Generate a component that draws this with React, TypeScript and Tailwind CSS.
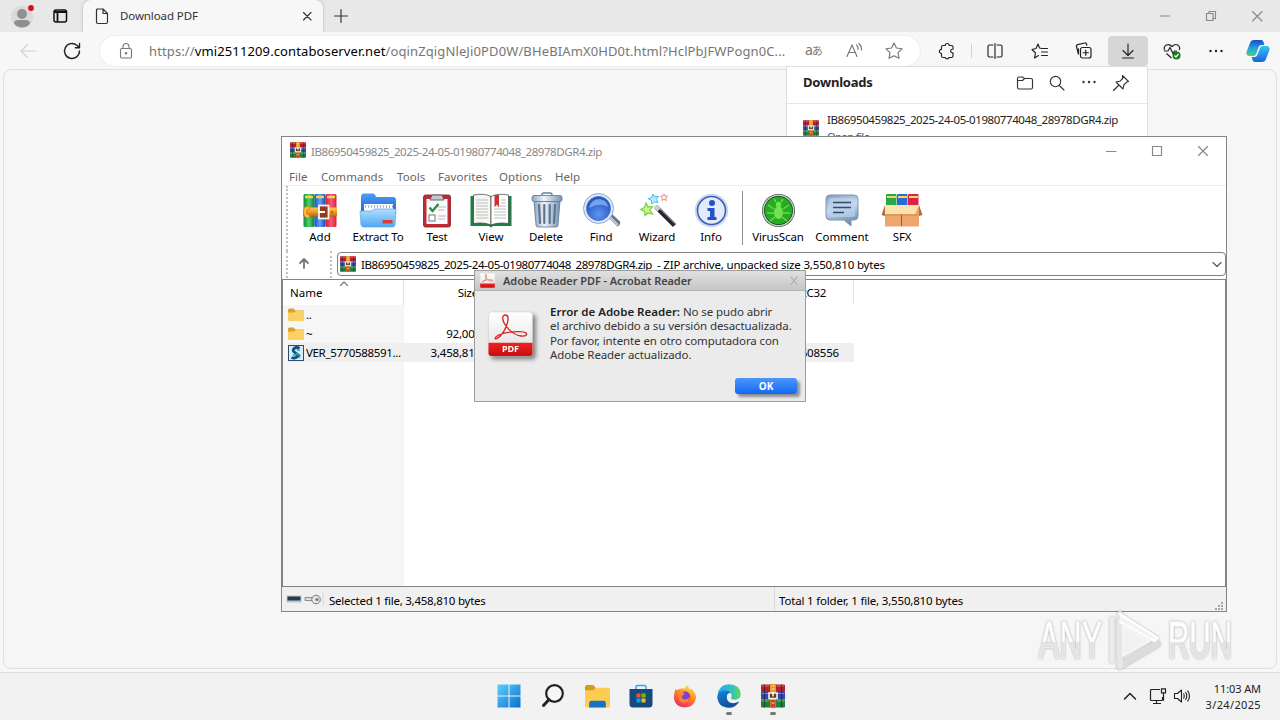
import type { ReactNode } from 'react';
import clsx from 'clsx';

function RarIcon({ className }: { className?: string }) {
  return (
    <svg viewBox="0 0 24 24" className={className}>
      <rect x="0" y="0.5" width="24" height="7.5" rx="1" fill="#b3222c" />
      <rect x="0" y="8" width="24" height="7.5" fill="#3a45a8" />
      <rect x="0" y="15.5" width="24" height="8" rx="1" fill="#22803c" />
      <path d="M1 2h7M16 2h7" stroke="#e8616a" strokeWidth="1.2" />
      <path d="M1 9.5h7M16 9.5h7" stroke="#7e8be6" strokeWidth="1.2" />
      <path d="M1 17h7M16 17h7" stroke="#5fc46f" strokeWidth="1.2" />
      <path d="M3.5 .5v23M20.5 .5v23" stroke="#20222c" strokeWidth="1.2" opacity="0.6" />
      <rect x="9" y="0" width="6" height="24" fill="#e49a2c" />
      <rect x="9.5" y="16" width="5" height="7.5" fill="#c9442a" />
      <path d="M8 9h8v5.500H8z" fill="#5b3a28" stroke="#fbf3e2" strokeWidth="1.600" />
      <path d="M12 8v4.500" stroke="#fff" strokeWidth="1.500" />
      <path d="M10.500 2h3M10.500 5h3M10.500 19h3" stroke="#ffe08a" strokeWidth="1.100" />
    </svg>
  );
}

function AddIcon() {
  return (
    <svg viewBox="0 0 42 36" className="h-9 w-[42px]">
      <defs>
        <linearGradient id="bkG"><stop offset="0" stopColor="#0c8a3c" /><stop offset="0.5" stopColor="#4fd268" /><stop offset="1" stopColor="#0c7b35" /></linearGradient>
        <linearGradient id="bkB"><stop offset="0" stopColor="#1653c0" /><stop offset="0.5" stopColor="#5fa2ff" /><stop offset="1" stopColor="#1348ab" /></linearGradient>
        <linearGradient id="bkR"><stop offset="0" stopColor="#c9183a" /><stop offset="0.5" stopColor="#ff5a72" /><stop offset="1" stopColor="#d02340" /></linearGradient>
        <linearGradient id="belt" x2="0" y2="1"><stop offset="0" stopColor="#ffc955" /><stop offset="0.5" stopColor="#f39a1f" /><stop offset="1" stopColor="#b76410" /></linearGradient>
      </defs>
      <rect x="4.500" y="2" width="11" height="33" rx="1.500" fill="url(#bkG)" />
      <rect x="15.500" y="2" width="11" height="33" rx="1.500" fill="url(#bkB)" />
      <rect x="26.500" y="2" width="11" height="33" rx="1.500" fill="url(#bkR)" />
      <path d="M6 5h8M17 5h8M28 5h8" stroke="#f4d552" strokeWidth="2.400" />
      <rect x="4" y="15.500" width="34" height="9" rx="1" fill="url(#belt)" />
      <path d="M10.500 14.500q-6-1-6 5.500t6 6v-3q-3 0-3-3t3-3z" fill="#ffbd45" stroke="#c8771a" strokeWidth="0.800" />
      <rect x="20" y="13.500" width="9.500" height="13" fill="#8d3d20" stroke="#fff5e4" strokeWidth="1.800" />
      <path d="M19 20h7" stroke="#fff" strokeWidth="2" />
      <circle cx="33" cy="20" r="0.900" fill="#8d4a10" />
    </svg>
  );
}

function ExtractIcon() {
  return (
    <svg viewBox="0 0 42 36" className="h-9 w-[42px]">
      <defs>
        <linearGradient id="fdA" x2="0" y2="1"><stop offset="0" stopColor="#4f9cf4" /><stop offset="1" stopColor="#1d5fd2" /></linearGradient>
        <linearGradient id="fdB" x2="0" y2="1"><stop offset="0" stopColor="#b2dffd" /><stop offset="1" stopColor="#4fa8f2" /></linearGradient>
      </defs>
      <path d="M4 5q0-3.500 3-3.500h9q2 0 3 3.500h17q3 0 3 3v14H4z" fill="url(#fdA)" />
      <rect x="7" y="12" width="29" height="11" fill="#f8fbff" />
      <path d="M8 14.500h28" stroke="#8b98ab" strokeWidth="2" strokeDasharray="1 2" />
      <path d="M3 19h12l2-2h22l-1 16q-.3 2-2.500 2H6.500q-2 0-2.500-2z" fill="url(#fdB)" stroke="#5aa5ec" strokeWidth="0.700" />
      <rect x="25.500" y="28" width="10" height="3.500" rx="0.500" fill="#dc3c33" />
    </svg>
  );
}

function TestIcon() {
  return (
    <svg viewBox="0 0 42 36" className="h-9 w-[42px]">
      <rect x="7.500" y="3" width="27" height="32" rx="2" fill="#c02a34" stroke="#8b1720" strokeWidth="0.800" />
      <path d="M10.500 7h21v25h-21z" fill="#fbfbfb" />
      <path d="M14 8l2-5h10l2 5z" fill="#c4c9d0" stroke="#555b66" strokeWidth="0.900" />
      <path d="M13.500 15.500l3 3.500 6-7" fill="none" stroke="#2a8f3c" strokeWidth="2.400" />
      <path d="M22 15h8M22 18h6M22 24h8M22 27h7" stroke="#b5b9c0" strokeWidth="1" />
      <rect x="13" y="23" width="6" height="6" fill="#fff" stroke="#70757f" />
    </svg>
  );
}

function ViewIcon() {
  return (
    <svg viewBox="0 0 42 36" className="h-9 w-[42px]">
      <path d="M0.500 4h41v30H23l-2 1.500L19 34H.5z" fill="#1f7d43" />
      <path d="M3.500 3q11-2 17.500 1.500V33Q14 30 3.500 31.500z" fill="#f6f6f2" stroke="#3b4038" strokeWidth="0.700" />
      <path d="M38.500 3Q27.500 1 21 4.500V33q7-3 17.500-1.500z" fill="#fff" stroke="#3b4038" strokeWidth="0.700" />
      <path d="M6 8h12M6 11h12M6 14h12M6 17h12M6 20h12M6 23h12M6 26h12M24 14h12M24 17h12M24 20h12M24 23h12M24 26h12M31 8h5M31 11h5" stroke="#bcc0bd" strokeWidth="1" />
      <path d="M24.500 3h4.500v12l-2.200-2.500-2.300 2.500z" fill="#cf2e33" />
    </svg>
  );
}

function DeleteIcon() {
  return (
    <svg viewBox="0 0 42 36" className="h-9 w-[42px]">
      <defs>
        <linearGradient id="bin"><stop offset="0" stopColor="#8ca5c2" /><stop offset="0.400" stopColor="#eef4fa" /><stop offset="1" stopColor="#7892b0" /></linearGradient>
      </defs>
      <path d="M17 3q0-2 2-2h6q2 0 2 2" fill="none" stroke="#64809f" strokeWidth="1.500" />
      <path d="M9 9h26l-2 24q0 2-2 2H13q-2 0-2-2z" fill="url(#bin)" stroke="#5a7593" strokeWidth="0.800" />
      <path d="M14 13l1 18M19.300 13v18M24.700 13v18M30 13l-1 18" stroke="#5c7591" strokeWidth="2.200" strokeLinecap="round" />
      <rect x="7" y="3.500" width="30" height="6" rx="2" fill="url(#bin)" stroke="#5a7593" strokeWidth="0.800" />
    </svg>
  );
}

function FindIcon() {
  return (
    <svg viewBox="0 0 42 36" className="h-9 w-[42px]">
      <defs>
        <radialGradient id="lens" cx="0.5" cy="0.75" r="0.75"><stop offset="0" stopColor="#5d95f2" /><stop offset="1" stopColor="#1d4cba" /></radialGradient>
      </defs>
      <path d="M28 25l4-3 8 7.500q1 3-2.500 5z" fill="#6d737d" />
      <path d="M30 25l8 8" stroke="#c4cad2" strokeWidth="2" />
      <circle cx="18.500" cy="16.500" r="15" fill="#dce9fa" stroke="#8ea8ce" strokeWidth="1" />
      <circle cx="18.500" cy="16.500" r="12" fill="url(#lens)" stroke="#4c75bd" />
      <path d="M9 16q2-9 11-9 7 1 8 8-8-5-19 1z" fill="#92bdfa" opacity="0.700" />
    </svg>
  );
}

function WizardIcon() {
  return (
    <svg viewBox="0 0 42 36" className="h-9 w-[42px]">
      <path d="M20 15l18.500 18.500" stroke="#24262a" strokeWidth="4.500" />
      <path d="M21 13.500l18 18" stroke="#878b92" strokeWidth="1.200" />
      <path d="M19 14l4 4" stroke="#c9ced5" strokeWidth="4.500" />
      <path d="M10 11l2 4 4.500-.5-2.500 3.500 2.500 4-4.500-1-3 2.500-.5-4-4-2 4-2z" fill="#c8f58e" stroke="#79d142" strokeWidth="1.200" />
      <path d="M17 2l1.800 2.800 3.700-.3-2 3L22 10.500l-3.500-.5-2.800 2-.2-3.500-3.300-1.800 3.600-1.200z" fill="#b7ecff" stroke="#45bfe8" />
      <path d="M28 2l1 2 2.500.2-1.800 1.800.5 2.500-2.200-1.200-2.200 1.200.5-2.500L24.500 4.200 27 4z" fill="#fff" stroke="#ee777b" strokeWidth="0.900" />
    </svg>
  );
}

function InfoIcon() {
  return (
    <svg viewBox="0 0 42 36" className="h-9 w-[42px]">
      <circle cx="21.500" cy="18.500" r="16.800" fill="#ced9ee" />
      <circle cx="21.500" cy="18.500" r="14" fill="#e3ebfb" stroke="#3d5fb8" strokeWidth="1.600" />
      <circle cx="22" cy="11" r="3" fill="#2352c6" />
      <path d="M17.500 16h7v9h2v3h-9v-3h2.500v-6h-2.500z" fill="#2352c6" />
    </svg>
  );
}

function VirusIcon() {
  return (
    <svg viewBox="0 0 42 36" className="h-9 w-[42px]">
      <circle cx="21.500" cy="18.500" r="16.500" fill="#223a28" />
      <circle cx="21.500" cy="18.500" r="15.200" fill="none" stroke="#bcd3bf" strokeWidth="1.500" />
      <circle cx="21.500" cy="18.500" r="13.700" fill="#23ad20" />
      <ellipse cx="21.500" cy="20.500" rx="4.500" ry="6.500" fill="#72e152" />
      <circle cx="21.500" cy="12.500" r="2.700" fill="#72e152" />
      <path d="M17 17l-6-4M17 21h-7M18 25l-5 4M26 17l6-4M26 21h7M25 25l5 4M19 10l-2-3M24 10l2-3" stroke="#6bd94b" strokeWidth="1.500" />
    </svg>
  );
}

function CommentIcon() {
  return (
    <svg viewBox="0 0 42 36" className="h-9 w-[42px]">
      <defs>
        <linearGradient id="cmt" x2="0.300" y2="1"><stop offset="0" stopColor="#7f9dc3" /><stop offset="0.500" stopColor="#c9dcf2" /><stop offset="1" stopColor="#7290b5" /></linearGradient>
      </defs>
      <path d="M9 3h24q4 0 4 4v17q0 4-4 4h-3v6l-7-6H9q-4 0-4-4V7q0-4 4-4z" fill="url(#cmt)" stroke="#7e94b0" />
      <rect x="8" y="6" width="26" height="19" rx="2.500" fill="#bcd1ea" opacity="0.700" />
      <path d="M12 10.500h18M12 15.500h18M12 20.500h11" stroke="#344a69" strokeWidth="1.700" />
    </svg>
  );
}

function SfxIcon() {
  return (
    <svg viewBox="0 0 42 36" className="h-9 w-[42px]">
      <rect x="5" y="2" width="10.500" height="14" rx="1" fill="#27a849" />
      <rect x="16" y="2" width="10.500" height="14" rx="1" fill="#2a68dc" />
      <rect x="27" y="2" width="10.500" height="14" rx="1" fill="#dc2343" />
      <path d="M6 5h9M17 5h9M28 5h9" stroke="#f1d75c" strokeWidth="2" />
      <path d="M4 13h34v21.500H4z" fill="#eda66e" />
      <path d="M4 13h34l-4 9H1.500z" fill="#fae3ac" />
      <path d="M38 13l3.500 10-3.500 1zM4 13L.500 23 4 24z" fill="#b46c3e" />
      <path d="M20.500 22v12" stroke="#9c5a33" />
      <path d="M4 23h33" stroke="#d18a56" strokeWidth="1" />
    </svg>
  );
}

interface Tool {
  label: string;
  icon: ReactNode;
  cell: string;
  text: string;
}

const tools: Tool[] = [
  { label: 'Add', icon: <AddIcon />, cell: 'w-14', text: 'tracking-normal' },
  { label: 'Extract To', icon: <ExtractIcon />, cell: 'w-[60px]', text: 'tracking-[-0.2px]' },
  { label: 'Test', icon: <TestIcon />, cell: 'w-[58px]', text: 'tracking-[-0.2px]' },
  { label: 'View', icon: <ViewIcon />, cell: 'w-[50px]', text: 'tracking-normal' },
  { label: 'Delete', icon: <DeleteIcon />, cell: 'w-[60px]', text: 'tracking-[-0.2px]' },
  { label: 'Find', icon: <FindIcon />, cell: 'w-[50px]', text: 'tracking-[-0.1px]' },
  { label: 'Wizard', icon: <WizardIcon />, cell: 'w-[62px]', text: 'tracking-[-0.1px]' },
  { label: 'Info', icon: <InfoIcon />, cell: 'w-[46px]', text: 'tracking-[-0.1px]' },
];

const extraTools: Tool[] = [
  { label: 'VirusScan', icon: <VirusIcon />, cell: 'w-[54px]', text: 'tracking-[-0.1px]' },
  { label: 'Comment', icon: <CommentIcon />, cell: 'w-[74px]', text: 'tracking-normal' },
  { label: 'SFX', icon: <SfxIcon />, cell: 'w-[46px]', text: 'tracking-[-0.2px]' },
];

function ToolButton({ tool }: { tool: Tool }) {
  return (
    <div className={clsx('flex flex-col items-center pt-1.5', tool.cell)}>
      {tool.icon}
      <span className={clsx('mt-px text-[11.5px] leading-4 whitespace-nowrap text-black', tool.text)}>{tool.label}</span>
    </div>
  );
}

function Dots() {
  return (
    <svg viewBox="0 0 20 20" className="size-5" fill="currentColor">
      <circle cx="4.500" cy="10" r="1.200" /><circle cx="10" cy="10" r="1.200" /><circle cx="15.500" cy="10" r="1.200" />
    </svg>
  );
}

function Line({ d, className }: { d: string; className?: string }) {
  return (
    <svg viewBox="0 0 20 20" className={clsx('size-5 shrink-0', className)} fill="none" stroke="currentColor" strokeWidth="1.150" strokeLinecap="round" strokeLinejoin="round">
      <path d={d} />
    </svg>
  );
}

function FolderIcon() {
  return (
    <svg viewBox="0 0 16 14" className="h-3.5 w-4">
      <path d="M0 2q0-1.500 1.500-1.500h4L7.500 2.500H15q1 0 1 1V6H0z" fill="#dda02b" />
      <path d="M0 4.500h6L8 3h7q1 0 1 1v8q0 1-1 1H1q-1 0-1-1z" fill="#fbd065" />
    </svg>
  );
}

function AcrobatMark({ className }: { className?: string }) {
  return (
    <svg viewBox="0 0 46 46" className={className}>
      <defs>
        <linearGradient id="pdfTop" x2="0" y2="1"><stop offset="0" stopColor="#ffffff" /><stop offset="1" stopColor="#dedede" /></linearGradient>
        <linearGradient id="pdfRed" x2="0" y2="1"><stop offset="0" stopColor="#f0231d" /><stop offset="1" stopColor="#c80d10" /></linearGradient>
      </defs>
      <rect x="0.500" y="0.500" width="45" height="45" rx="3" fill="url(#pdfTop)" stroke="#cfcfcf" strokeWidth="0.600" />
      <path d="M0.500 32h45v11q0 2.500-2.500 2.500H3Q.5 45.500.5 43z" fill="url(#pdfRed)" />
      <path d="M10 27c5-3 10.500-13 10.500-20 0-4.500-5.500-4.500-5.500-.5 0 7 10 17.500 18.500 18.500 5 .5 7-1 5.500-2.700C36 19 17 21 10 24.500c-4 2.500-3 5 0 2.500z" fill="none" stroke="#d9262a" strokeWidth="1.400" strokeLinejoin="round" />
    </svg>
  );
}

function BrowserTabs() {
  return (
    <div className="flex h-8 items-stretch bg-[#e8e8e8]">
      <div className="flex w-[83px] items-center">
        <svg viewBox="0 0 26 28" className="ml-[10px] h-7 w-[26px]">
          <circle cx="12" cy="15" r="11" fill="#dcdad8" />
          <circle cx="12" cy="12" r="5" fill="#918f8d" />
          <path d="M4 21.500q0-3.500 4-3.500h8q4 0 4 3.500-3 4-8 4t-8-4z" fill="#918f8d" />
          <circle cx="21" cy="6" r="2.900" fill="#e00b1c" />
        </svg>
        <svg viewBox="0 0 16 16" className="ml-4 size-4" fill="none" stroke="#111" strokeWidth="1.500">
          <rect x="2" y="2" width="12.500" height="12" rx="2" />
          <path d="M2 4h12.500M5.500 5v9" strokeWidth="1.800" />
        </svg>
      </div>
      <div className="flex w-60 items-center rounded-t-lg bg-[#f7f7f7] shadow-[0_0_3px_rgba(0,0,0,0.25)]">
        <svg viewBox="0 0 14 17" className="ml-[12px] h-[17px] w-3.5" fill="none" stroke="#333" strokeWidth="1.200" strokeLinejoin="round">
          <path d="M2.500 1h5.500l4.500 4.500V14q0 1.500-1.500 1.500H3Q1.500 15.500 1.500 14V2q0-1 1-1zM8 1v4.500h4.500" />
        </svg>
        <span className="ml-[11px] flex-1 text-[11.5px] tracking-[-0.1px] text-[#333]">Download PDF</span>
        <Line d="M6.500 6.500l7.500 7.500M14 6.500l-7.500 7.500" className="mr-[6px] text-[#333]" />
      </div>
      <div className="flex flex-1 items-center pl-2 text-[#333]">
        <Line d="M3.500 10h13M10 3.500v13" />
      </div>
      <div className="flex w-[138px] items-center text-[#888]">
        <div className="flex flex-1 justify-center"><Line d="M5.500 10h9" /></div>
        <div className="flex flex-1 justify-center"><Line d="M5.500 7.500h6.500v7H5.500zM8 7.500V5.500h6.500v7H12" /></div>
        <div className="flex flex-1 justify-center"><Line d="M5.500 5.500l9.500 9.500M15 5.500l-9.500 9.500" /></div>
      </div>
    </div>
  );
}

function AddressBar() {
  return (
    <div className="flex h-9 items-start bg-[#f7f7f7] pt-1">
      <div className="flex h-[30px] w-[100px] items-center">
        <Line d="M18 10H3M9.500 3.500L3 10l6.500 6.500" className="ml-[18px] text-[#d0d0d0]" />
        <Line d="M17.500 10a7.500 7.500 0 1 1-2.700-5.800L17.300 6.500M17.500 2.500v4.200h-4.200" className="ml-6 text-[#222] [stroke-width:1.400]" />
      </div>
      <div className="flex h-[30px] w-[820px] items-center rounded-full bg-white shadow-[0_0_2px_rgba(0,0,0,0.12)]">
        <svg viewBox="0 0 16 18" className="ml-[18px] h-[18px] w-4" fill="none" stroke="#777" strokeWidth="1.100">
          <rect x="2.500" y="6.500" width="11" height="9.500" rx="1.500" />
          <path d="M5 6.500V4.500q0-3 3-3t3 3v2" />
          <circle cx="8" cy="11.300" r="0.700" fill="#777" />
        </svg>
        <span className="mt-px ml-[15px] w-[641px] text-[13px] tracking-[0.12px] whitespace-nowrap text-[#767676]">
          https://<span className="text-black">vmi2511209.contaboserver.net</span>/oqinZqigNleJi0PD0W/BHeBIAmX0HD0t.html?HclPbJFWPogn0C...
        </span>
        <span className="mb-[3px] ml-[15px] w-[20px] font-['Noto_Sans','Noto_Sans_CJK_JP',sans-serif] text-[11px] tracking-[-1px] whitespace-nowrap text-[#777]"><span className="text-[14px]">a</span>あ</span>
        <span className="ml-[19px] flex w-5 text-[#777]">
          <Line d="M3 15.500L8 4l5 11.500M5 11.500h6.200M12.500 4q2 2 1.500 4.500M15 2.500q3 3 2.500 6.500" />
        </span>
        <Line d="M10 2l2.400 5 5.600.8-4 3.900 1 5.600-5-2.600-5 2.600 1-5.600-4-3.900 5.600-.8z" className="ml-5 text-[#777]" />
      </div>
      <div className="flex h-[30px] flex-1 items-center pl-[17px] text-[#222]">
        <Line d="M4.500 6q0-1.500 1.500-1.500h2.200a2 2 0 1 1 4 0h2.300q1.500 0 1.500 1.500v2.200h-.5a1.800 1.800 0 0 0 0 3.700h.5V15q0 1.500-1.500 1.500H12a2 2 0 0 1-3.800 0H6q-1.500 0-1.500-1.500v-2.500a2.100 2.100 0 1 1 0-4.200z" />
        <div className="mr-[13px] ml-3.5 h-3.5 w-px bg-[#d2d2d2]" />
        <Line d="M7.500 4H4.500q-1.500 0-1.500 1.500v8Q3 15 4.500 15h3M12.500 4h3q1.500 0 1.500 1.500v8q0 1.500-1.500 1.500h-3M7.500 4v11M12.500 4v11" className="hidden" />
        <Line d="M8 4H4.500Q3 4 3 5.500v9Q3 16 4.500 16H8M12 4h3.500Q17 4 17 5.500v9q0 1.500-1.500 1.500H12M10 2.500v15" />
        <Line d="M12 7.500L9.500 7 8 3 6 7.500 2 8.500l3.500 3.500L4.500 17l4-2.500M11.500 7.500h6M11.500 11h6M11.500 14.500h6" className="ml-[25px]" />
        <svg viewBox="0 0 20 20" className="ml-6 size-5" fill="none" stroke="currentColor" strokeWidth="1.200">
          <path d="M4.500 13.500L2.500 5.500q-.3-1.500 1.200-1.800l7-1.700q1.500-.3 1.800 1l.4 1.700M4.500 13.500V7.500" />
          <rect x="6.500" y="6.500" width="10.500" height="10.500" rx="2" />
          <path d="M11.750 8.800v6M8.800 11.750h6" />
        </svg>
        <div className="ml-3.5 flex h-[30px] w-10 items-center justify-center rounded bg-[#d6d6d6]">
          <Line d="M10 3v11M5 9.500l5 5 5-5M4.500 17h11" />
        </div>
        <svg viewBox="0 0 20 20" className="ml-3.5 size-5" fill="none" stroke="currentColor" strokeWidth="1.200">
          <path d="M2.500 9q-1-3.500 1.800-5 3-1.300 5.700 1.500 3-3 5.700-1.500 2.800 1.800 1.600 5M4.500 12.500l5 4.500M2 10h4l2-3.500 3 6 1.500-2.500h2.500" />
          <circle cx="14.500" cy="14.500" r="4" fill="#187a18" stroke="none" />
          <path d="M12.500 14.500l1.500 1.500 2.500-3" stroke="#fff" />
        </svg>
        <span className="ml-6"><Dots /></span>
        <svg viewBox="0 0 24 24" className="ml-5 size-6">
          <defs>
            <linearGradient id="cpA" x2="0" y2="1"><stop offset="0" stopColor="#1b48cf" /><stop offset="0.500" stopColor="#1fa3dd" /><stop offset="1" stopColor="#4fcf80" /></linearGradient>
            <linearGradient id="cpB" x2="0" y2="1"><stop offset="0" stopColor="#30c4f5" /><stop offset="1" stopColor="#1b63dc" /></linearGradient>
          </defs>
          <path d="M8 1h7q2 0 2.500 2l.9 3h-3q-2 0-2.700 2l-2.500 7q-.7 2-2.500 2H3.500Q0 17 .5 13L4 4q1-3 4-3z" fill="url(#cpA)" />
          <path d="M16 23H9q-2 0-2.500-2L5.600 18h3q2 0 2.700-2L14 9q.7-2 2.500-2h4q3.500 0 3 4L20 20q-1 3-4 3z" fill="url(#cpB)" />
        </svg>
      </div>
    </div>
  );
}

function DownloadsPanel() {
  return (
    <div className="absolute top-[66px] left-[786px] h-[90px] w-[362px] border border-[#dedede] bg-white">
      <div className="flex h-[37px] items-center border-b border-[#e6e6e6] pb-1 text-[#333]">
        <span className="ml-4 flex-1 text-[13px] font-bold tracking-[-0.2px] text-[#222]">Downloads</span>
        <Line d="M2.500 5.500q0-1.500 1.500-1.500h3.500l2 1.500H16q1.500 0 1.500 1.500v7.500q0 1.500-1.500 1.500H4q-1.500 0-1.500-1.500zM2.500 7.500h5l2-2" className="mr-3" />
        <Line d="M13.700 8.500a5.200 5.200 0 1 1-10.400 0 5.200 5.200 0 0 1 10.400 0zM12.300 12.500l4.700 4.500" className="mr-3" />
        <span className="mr-3 pb-0.5"><Dots /></span>
        <Line d="M11.500 2.500l6 6-2 .8-2.700 2.700-.8 4-7-7 4-.8 2.700-2.700zM7.500 12.500l-5 5" className="mr-4" />
      </div>
      <div className="flex pt-[8px]">
        <RarIcon className="mt-2 ml-4 size-4" />
        <div className="ml-2 flex flex-col">
          <span className="text-[11.5px] leading-4 tracking-[-0.42px] whitespace-nowrap text-[#222]">IB86950459825_2025-24-05-01980774048_28978DGR4.zip</span>
          <span className="mt-px text-[11px] leading-4 tracking-[-0.5px] text-[#0a5fb8]">Open file</span>
        </div>
      </div>
    </div>
  );
}

const menu = [
  { label: 'File', cell: 'w-8' },
  { label: 'Commands', cell: 'w-[76px]' },
  { label: 'Tools', cell: 'w-[41px]' },
  { label: 'Favorites', cell: 'w-[61px]' },
  { label: 'Options', cell: 'w-14' },
  { label: 'Help', cell: 'w-8' },
];

const rows = [
  { name: '..', size: '', script: false },
  { name: '~', size: '92,000', script: false },
  { name: 'VER_5770588591...', size: '3,458,810', script: true },
];

function ArchiveWindow() {
  return (
    <div className="absolute top-[136px] left-[281px] flex h-[476px] w-[946px] flex-col border border-[#858585] bg-white">
      <div className="flex h-[29px] items-center text-[#888]">
        <RarIcon className="mb-[3px] ml-2 size-4" />
        <span className="ml-[5px] flex-1 text-[11.5px] tracking-[-0.42px]">IB86950459825_2025-24-05-01980774048_28978DGR4.zip</span>
        <div className="mb-px flex w-[138px]">
          <div className="flex flex-1 justify-center"><Line d="M5.500 10.500h9.500" /></div>
          <div className="flex flex-1 justify-center"><Line d="M5.500 5.500h9v9h-9z" /></div>
          <div className="flex flex-1 justify-center"><Line d="M5.500 5.500l9 9M14.500 5.500l-9 9" /></div>
        </div>
      </div>
      <div className="flex h-5 items-center border-b border-[#ebebeb] pt-0.5 pl-[7px] text-[11.5px] tracking-[0.05px] text-[#666]">
        {menu.map((m) => (
          <span key={m.label} className={clsx('whitespace-nowrap', m.cell)}>{m.label}</span>
        ))}
      </div>

      <div className="flex h-[65px] pl-1">
        <div className="mr-[4px] w-px border-l-2 border-dotted border-[#c0c0c0]" />
        {tools.map((t) => <ToolButton key={t.label} tool={t} />)}
        <div className="mt-[5px] mr-2 ml-2 h-[54px] w-px bg-[#909090]" />
        {extraTools.map((t) => <ToolButton key={t.label} tool={t} />)}
      </div>

      <div className="flex h-[27px] pl-1">
        <div className="w-px border-l-2 border-dotted border-[#c0c0c0]" />
        <div className="flex w-[42px] items-center pl-1.5">
          <Line d="M10 14V5.500M6 9l4-4 4 4" className="mb-0.5 text-[#777] [stroke-width:1.800]" />
        </div>
        <div className="w-[7px] border-l-2 border-dotted border-[#c0c0c0]" />
        <div className="mt-px flex h-6 w-[889px] items-center rounded-sm border border-[#808080] text-[11.5px] whitespace-nowrap text-black">
          <RarIcon className="ml-0.5 size-4" />
          <span className="mt-px ml-[5px] tracking-[-0.42px]">IB86950459825_2025-24-05-01980774048_28978DGR4.zip</span>
          <span className="mt-px ml-[5px] flex-1 tracking-[-0.17px]">- ZIP archive, unpacked size 3,550,810 bytes</span>
          <Line d="M6 8.500l4 4 4-4" className="-mr-0.5 text-[#555]" />
        </div>
      </div>

      <div className="mt-px flex h-[308px] flex-col border border-[#828282] bg-white">
        <div className="flex h-[25px] items-center text-[11.5px] text-black">
          <div className="relative h-full w-[121px] border-r border-[#e3e3e3] pt-1 pl-[7px]">
            Name
            <Line d="M6.500 11.500L10 8l3.500 3.500" className="absolute -top-[6px] left-[51px] text-[#777]" />
          </div>
          <div className="h-full w-[80px] pt-1 pr-1.5 text-right tracking-[-0.2px]">Size</div>
          <div className="h-full w-[370px] border-r border-[#e3e3e3] pt-1 pl-[309px] tracking-[-0.4px]">CRC32</div>
        </div>
        <div className="flex h-[281px] flex-col bg-[linear-gradient(to_right,#f6f6f6_121px,white_121px)]">
          {rows.map((r) => (
            <div key={r.name} className={clsx('flex h-[19px] w-[571px] items-center text-[11.5px] text-black', r.script && 'bg-[linear-gradient(to_right,transparent_5px,#efefef_5px)]')}>
              <div className="flex w-[121px] items-center gap-[2px] pl-[5px] whitespace-nowrap">
                {r.script ? (
                  <svg viewBox="0 0 16 16" className="size-4">
                    <rect x="0.500" y="0.500" width="15" height="15" fill="#d9eef7" stroke="#2a4e72" />
                    <path d="M11.500 3.500Q9 1.500 6 3.500 4 6 7 7.500t2.500 4Q7 14 3.500 12.500" fill="none" stroke="#174e80" strokeWidth="2.800" />
                    <path d="M12 5.500L9 4.500M5 10h4M8 8l4 2-1 3" fill="none" stroke="#24a1b4" strokeWidth="1.400" />
                  </svg>
                ) : <FolderIcon />}
                <span className="tracking-[-0.35px]">{r.name}</span>
              </div>
              <div className="w-20 pr-[3px] text-right tracking-[-0.2px]">{r.size}</div>
              {r.script && <div className="w-[355px] text-right tracking-[-0.2px]">6E608556</div>}
            </div>
          ))}
        </div>
      </div>

      <div className="flex flex-1 items-center bg-[#f0f0f0] text-[11.5px] tracking-[-0.25px] text-black">
        <svg viewBox="0 0 40 14" className="ml-1 h-3.5 w-10">
          <rect x="0.500" y="3.500" width="15" height="7" fill="#b4c6d5" />
          <rect x="1.500" y="4.500" width="13" height="4" fill="#263b4b" />
          <path d="M19 5.500h9v3h-9z" fill="#ddd" stroke="#777" strokeWidth="0.800" />
          <circle cx="30" cy="7.500" r="4.300" fill="#e5e5e5" stroke="#777" />
          <circle cx="31" cy="7.500" r="1.500" fill="#777" />
          <path d="M37 0v14" stroke="#d6d6d6" />
        </svg>
        <span className="ml-[3px] flex h-full w-[446px] items-center border-r border-[#d6d6d6] pt-[3px]">Selected 1 file, 3,458,810 bytes</span>
        <span className="ml-1 flex-1 pt-[3px] tracking-[-0.18px]">Total 1 folder, 1 file, 3,550,810 bytes</span>
        <svg viewBox="0 0 10 10" className="mr-0.5 size-2.5 self-end" fill="#a8a8a8">
          <path d="M7 1h2v2H7zM4 4h2v2H4zM7 4h2v2H7zM1 7h2v2H1zM4 7h2v2H4zM7 7h2v2H7z" />
        </svg>
      </div>
    </div>
  );
}

function ErrorDialog() {
  return (
    <div className="absolute top-[270px] left-[474px] flex h-[132px] w-[332px] flex-col border border-[#9c9c9c] bg-[#ebebeb] text-[#333]">
      <div className="flex h-5 items-center border-b border-[#b5b5b5] bg-gradient-to-b from-[#e0e0e0] to-[#c6c6c6]">
        <AcrobatMark className="ml-[5px] size-[15px]" />
        <span className="mt-0.5 ml-[8px] flex-1 text-[11px] font-semibold tracking-[-0.07px] text-[#444]">Adobe Reader PDF - Acrobat Reader</span>
        <Line d="M7 6l6 7.500M13 6l-6 7.500" className="mr-px text-[#aaa]" />
      </div>
      <div className="flex pt-[14px] pl-[13px]">
        <div className="relative mt-1.5 h-[46px] w-[45px] drop-shadow-[3px_3px_2px_rgba(0,0,0,0.45)]">
          <AcrobatMark className="h-[46px] w-[45px]" />
          <span className="absolute bottom-[2px] left-0 w-full text-center text-[9px] leading-3 font-bold text-white">PDF</span>
        </div>
        <p className="ml-[17px] text-[11.5px] leading-[14.4px] tracking-[-0.1px] whitespace-nowrap text-[#333]">
          <span className="font-semibold tracking-normal text-[#222]">Error de Adobe Reader:</span> No se pudo abrir<br />
          el archivo debido a su versión desactualizada.<br />
          Por favor, intente en otro computadora con<br />
          Adobe Reader actualizado.
        </p>
      </div>
      <button className="mt-[15px] mr-[8px] h-4 w-[62px] self-end rounded-[3px] bg-gradient-to-b from-[#4c96fb] to-[#0b68f4] text-[10px] leading-4 font-bold text-white shadow-[3px_3px_3px_rgba(0,0,0,0.4)]">OK</button>
    </div>
  );
}

function Watermark() {
  return (
    <div className="absolute top-[609px] left-[1039px] flex h-16 w-[200px] items-center font-['Liberation_Sans',sans-serif] text-[51px] leading-[64px] drop-shadow-[0_0_1px_rgba(0,0,0,0.3)]">
      <div className="w-[66px]">
        <div className="w-[112px] origin-left scale-x-[0.59] bg-[linear-gradient(white_52%,#e2e2e2_52%)] bg-clip-text tracking-[1px] text-transparent [-webkit-text-stroke:1px_rgba(240,240,240,0.8)]">ANY</div>
      </div>
      <svg viewBox="0 0 60 64" className="h-16 w-[60px] shrink-0" fill="none" strokeLinejoin="round" strokeLinecap="round">
        <path d="M7 10v42" stroke="#ececec" strokeWidth="5" />
        <path d="M15 57l37-22" stroke="#dcdcdc" strokeWidth="7" />
        <path d="M15 5v52" stroke="#e6e6e6" strokeWidth="6" />
        <path d="M15 5l38 24-4 3-34-19" fill="#f3f3f3" stroke="#fefefe" strokeWidth="2.500" />
        <path d="M18 17v30l27-15z" fill="#f1f1f1" stroke="#f8f8f8" strokeWidth="1.500" />
      </svg>
      <div className="w-[64px]">
        <div className="ml-[3px] w-[112px] origin-left scale-x-[0.58] bg-[linear-gradient(white_52%,#e2e2e2_52%)] bg-clip-text text-transparent [-webkit-text-stroke:1px_rgba(240,240,240,0.8)]">RUN</div>
      </div>
    </div>
  );
}

function Taskbar() {
  return (
    <div className="flex h-12 items-center border-t border-[#dcdcdc] bg-[#f2f2f2]">
      <div className="flex flex-1 items-center gap-5 pb-px pl-[496.5px]">
        <svg viewBox="0 0 24 24" className="size-6">
          <defs><linearGradient id="win" x2="1" y2="1"><stop offset="0" stopColor="#5cd0fb" /><stop offset="1" stopColor="#0a6fd2" /></linearGradient></defs>
          <path d="M.5.500h11v11H.5zM12.500.500h11v11h-11zM.5 12.500h11v11H.5zM12.500 12.500h11v11h-11z" fill="url(#win)" />
        </svg>
        <svg viewBox="0 0 24 24" className="size-6" fill="none" stroke="#222">
          <circle cx="13.500" cy="9.500" r="8.300" strokeWidth="2.200" fill="#f7f7f7" />
          <path d="M8 15.500l-5.500 6" strokeWidth="3" strokeLinecap="round" />
        </svg>
        <svg viewBox="0 0 24 24" className="-mr-px size-[25px]">
          <path d="M0 3q0-2 2-2h6l2.500 3-2 3H0z" fill="#d49a18" />
          <path d="M0 6h8l2.500-2.500H22q2 0 2 2V21q0 1.500-1.500 1.500h-21Q0 22.500 0 21z" fill="#fccd50" />
          <path d="M4 22.500V18q0-2 2-2h12q2 0 2 2v4.500z" fill="#1673c9" />
        </svg>
        <svg viewBox="0 0 24 24" className="size-6">
          <path d="M7 6V3q0-1.500 1.500-1.500h7Q17 1.500 17 3v3" fill="none" stroke="#30a9e8" strokeWidth="1.500" />
          <path d="M.5 5h23v15q0 3.500-3.500 3.500H4Q.5 23.500.5 20z" fill="#174a7c" />
          <path d="M7.500 9.500h4v4h-4z" fill="#f25022" /><path d="M12.500 9.500h4v4h-4z" fill="#7fba00" />
          <path d="M7.500 14.500h4v4h-4z" fill="#00a4ef" /><path d="M12.500 14.500h4v4h-4z" fill="#ffb900" />
        </svg>
        <svg viewBox="0 0 24 24" className="size-6">
          <defs><linearGradient id="fox" x1="0.800" x2="0.300" y2="1"><stop offset="0" stopColor="#fff04c" /><stop offset="0.450" stopColor="#ff8a26" /><stop offset="1" stopColor="#ee2864" /></linearGradient></defs>
          <path d="M2.500 5q.8 1 1.500 1 2-1.500 4.500-1.500 2-.5 3 .5L14 1q2 2 2.500 4.500l2-1q5 5 4.500 9.500-1.500 9-11 9.500Q2 23 .8 14q0-5 1.700-9z" fill="url(#fox)" />
          <circle cx="12.200" cy="12.500" r="5" fill="#7b3fd3" />
          <path d="M5 8.500l4-1 3 2.500-2.500 1.500q-2 3 2 4 3.500 0 5-3-.5 5.500-5.500 6.500-6.500-.5-6-10.500z" fill="#ff8428" />
        </svg>
        <div className="relative size-6">
          <svg viewBox="0 0 24 24" className="size-6">
            <defs>
              <linearGradient id="edA"><stop offset="0" stopColor="#2ba7e9" /><stop offset="0.600" stopColor="#2fc2c5" /><stop offset="1" stopColor="#63d957" /></linearGradient>
              <linearGradient id="edB" x2="0.500" y2="1"><stop offset="0" stopColor="#1584df" /><stop offset="1" stopColor="#114b93" /></linearGradient>
            </defs>
            <path d="M.5 11.500Q1.500.5 12 .2q11.500.5 11.800 10-.3 5.300-6 5.500-4-.2-3.800-2 1.500-2 0-4.200-4.500-4.500-13.500 2z" fill="url(#edA)" />
            <path d="M.3 12.500q1-6 7.700-6 4 0 5.500 2-4 1-3.700 5.300.7 6.200 8.200 5.200l4.500-1.500Q18 24 12 23.800.6 23.200.3 12.500z" fill="url(#edB)" />
          </svg>
          <div className="absolute -bottom-[7px] left-[9px] h-[3px] w-1.5 rounded-full bg-[#777]" />
        </div>
        <div className="relative size-6">
          <RarIcon className="size-6" />
          <div className="absolute -bottom-[7px] left-[9px] h-[3px] w-1.5 rounded-full bg-[#777]" />
        </div>
      </div>
      <Line d="M4.500 12L10 6.500l5.500 5.500" className="mr-[9px] text-[#222] [stroke-width:1.500]" />
      <svg viewBox="0 0 18 18" className="size-[18px]" fill="none" stroke="#222" strokeWidth="1.200">
        <path d="M11 1.500H2.500Q1.500 1.500 1.500 2.500v9q0 1 1 1h10q1 0 1-1V9M7.500 12.500v3M4 15.500h8M12.500 .8h4v4h-4zM14.500 4.800v8" />
      </svg>
      <svg viewBox="0 0 18 18" className="ml-[6px] size-[18px]" fill="none" stroke="#222" strokeWidth="1.100" strokeLinejoin="round">
        <path d="M1.500 5.500h3L8.500 2v12l-4-3.500h-3zM10.500 5.500q1.500 2.500 0 5M12.500 4q2.500 4 0 8M14.500 2.500q4 5.500 0 11" />
      </svg>
      <div className="mr-[19px] ml-2 flex w-[62px] flex-col items-end text-[11px] leading-4 whitespace-nowrap text-[#222]">
        <span className="tracking-[-0.1px]">11:03 AM</span>
        <span className="tracking-[0.35px]">3/24/2025</span>
      </div>
    </div>
  );
}

export default function App() {
  return (
    <div className="relative flex h-[720px] w-[1280px] flex-col overflow-hidden bg-[#f7f7f7] font-['Noto_Sans',sans-serif]">
      <BrowserTabs />
      <AddressBar />
      <div className="mx-[3px] mt-px mb-[3px] flex-1 rounded-lg border border-[#e0e0e0] bg-[#f6f6f6]" />
      <Taskbar />
      <DownloadsPanel />
      <ArchiveWindow />
      <Watermark />
      <ErrorDialog />
    </div>
  );
}
